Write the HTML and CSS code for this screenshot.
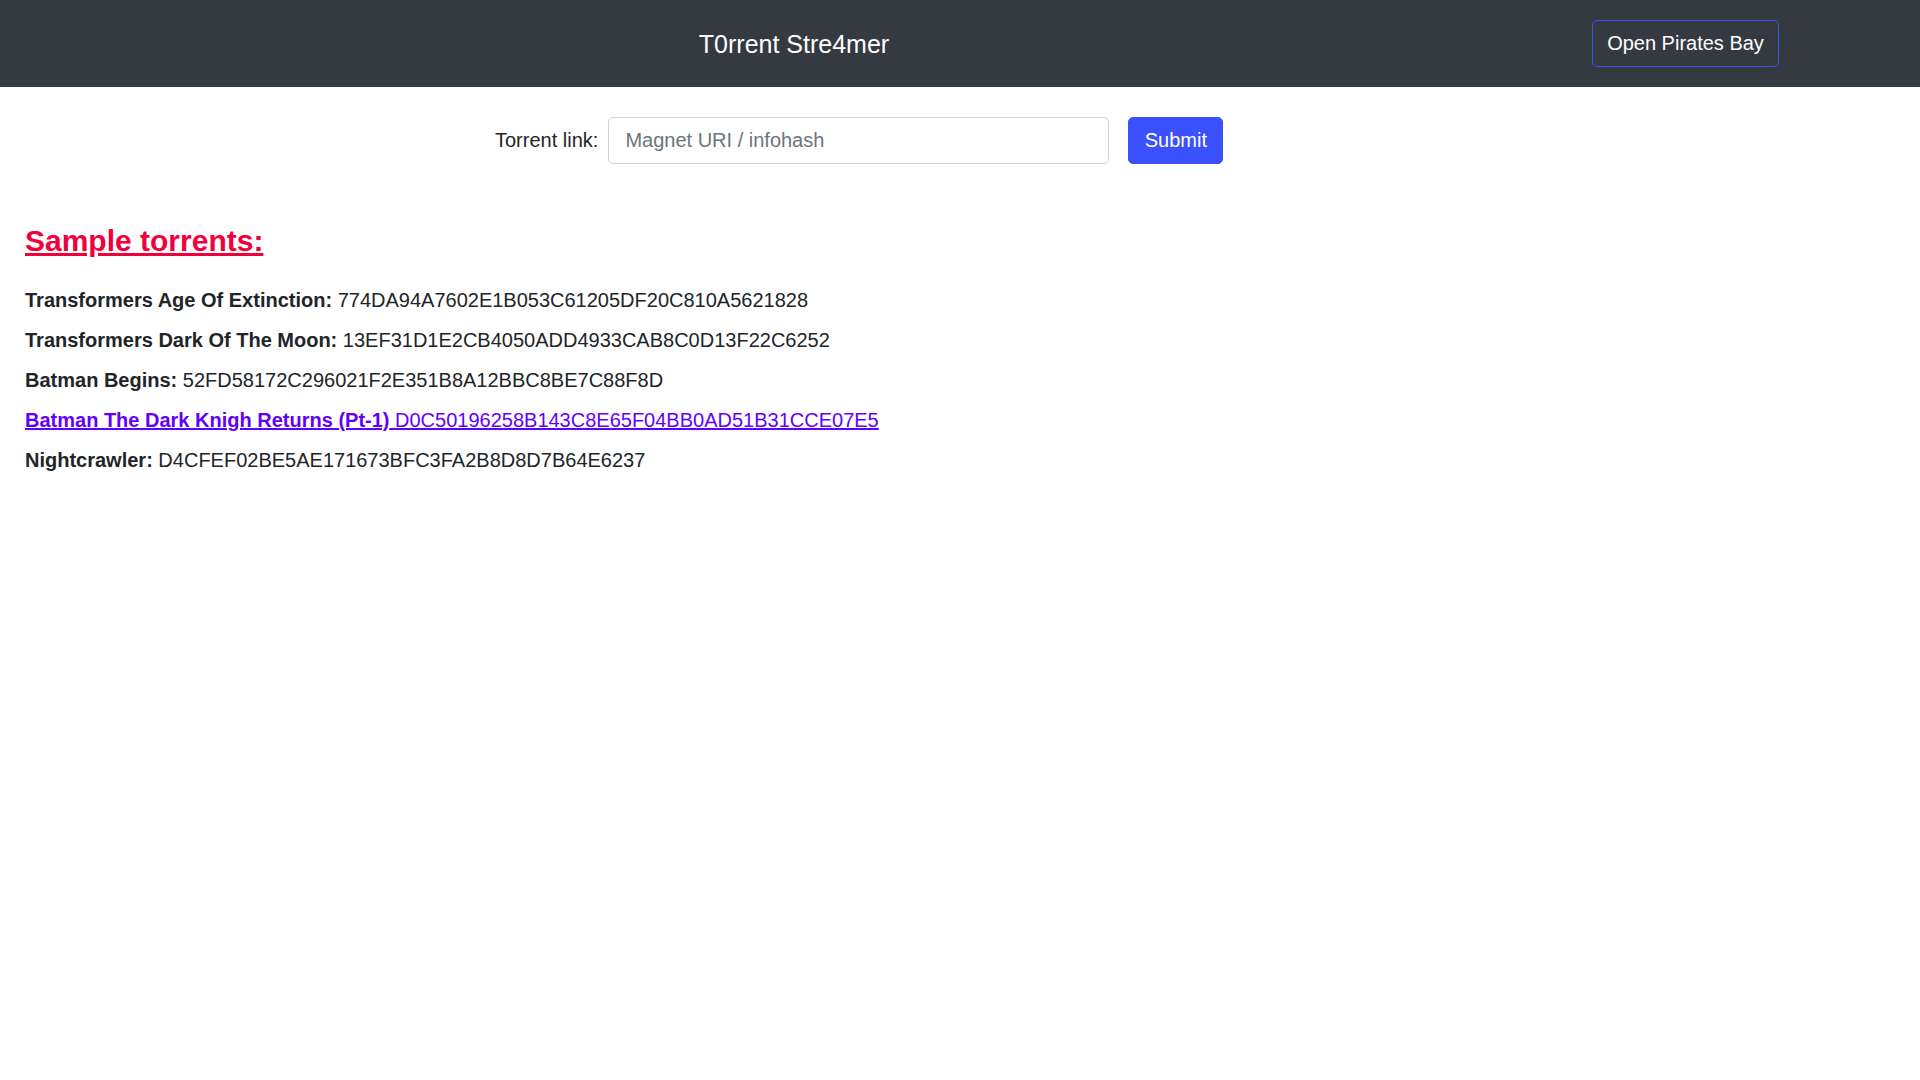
FILE: index.html
```html
<!DOCTYPE html>
<html lang="en">
<head>
<meta charset="utf-8">
<title>T0rrent Stre4mer</title>
<link rel="stylesheet" href="styles.css">
</head>
<body>
<header class="topbar">
  <div class="brand">T0rrent Stre4mer</div>
  <button class="btn-outline">Open Pirates Bay</button>
</header>
<form class="search-form">
  <label class="search-label" for="link">Torrent link:</label>
  <input id="link" class="search-input" type="text" placeholder="Magnet URI / infohash">
  <button type="button" class="btn-primary">Submit</button>
</form>
<main class="content">
  <h2 class="samples-title">Sample torrents:</h2>
  <p class="sample"><b>Transformers Age Of Extinction:</b> 774DA94A7602E1B053C61205DF20C810A5621828</p>
  <p class="sample"><b>Transformers Dark Of The Moon:</b> 13EF31D1E2CB4050ADD4933CAB8C0D13F22C6252</p>
  <p class="sample"><b>Batman Begins:</b> 52FD58172C296021F2E351B8A12BBC8BE7C88F8D</p>
  <p class="sample"><a class="sample-link" href="#"><b>Batman The Dark Knigh Returns (Pt-1)</b> D0C50196258B143C8E65F04BB0AD51B31CCE07E5</a></p>
  <p class="sample"><b>Nightcrawler:</b> D4CFEF02BE5AE171673BFC3FA2B8D8D7B64E6237</p>
</main>
</body>
</html>
```
FILE: styles.css
```css
* { box-sizing: border-box; }
html, body {
  margin: 0;
  padding: 0;
  background: #ffffff;
  font-family: "Liberation Sans", Arial, sans-serif;
  color: #212529;
}
.topbar {
  display: flex;
  align-items: center;
  height: 87px;
  background: #343a40;
}
.brand {
  flex: 1;
  margin-right: 4px;
  text-align: center;
  color: #ffffff;
  font-size: 25px;
  line-height: 30px;
}
.btn-outline {
  margin-right: 141px;
  width: 187px;
  height: 47px;
  padding: 0;
  font-family: inherit;
  font-size: 20px;
  color: #ffffff;
  background: transparent;
  border: 1px solid #3b50fe;
  border-radius: 5px;
}
.search-form {
  display: flex;
  align-items: center;
  padding: 30px 0 0 495px;
  margin: 0;
}
.search-label {
  font-size: 20px;
  margin-right: 10px;
  color: #212529;
}
.search-input {
  width: 501px;
  height: 47px;
  padding: 0 16px;
  font-family: inherit;
  font-size: 20px;
  color: #495057;
  border: 1px solid #ced4da;
  border-radius: 5px;
  outline: none;
}
.search-input::placeholder { color: #6c757d; }
.btn-primary {
  margin-left: 19px;
  width: 95px;
  height: 47px;
  font-family: inherit;
  font-size: 20px;
  color: #ffffff;
  background: #3b50fe;
  border: 1px solid #3b50fe;
  border-radius: 5px;
}
.content {
  padding: 59px 0 0 25px;
}
.samples-title {
  margin: 0 0 29px;
  font-size: 30px;
  line-height: 36px;
  font-weight: bold;
  color: #f0003c;
  text-decoration: underline;
}
.sample {
  margin: 0 0 16px;
  font-size: 20px;
  line-height: 24px;
}
.sample-link {
  color: #6200ff;
  text-decoration: underline;
}
```
